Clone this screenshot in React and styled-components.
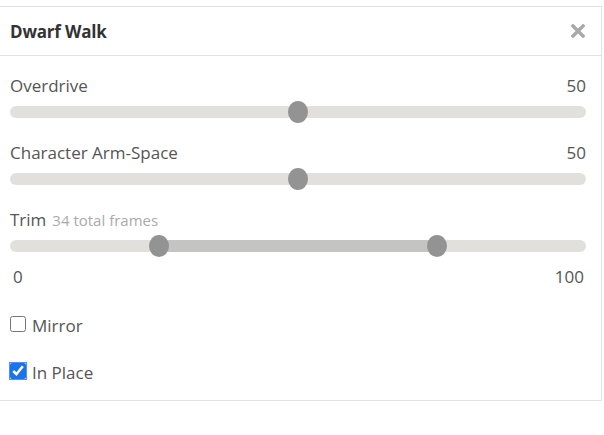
import React, { useState } from 'react';
import styled, { createGlobalStyle } from 'styled-components';

const GlobalStyle = createGlobalStyle`
  body {
    margin: 0;
    background: #fff;
    font-family: "Open Sans", "Noto Sans", sans-serif;
  }
`;

const Page = styled.div`
  padding: 6px 2px 0 0;
`;

const Panel = styled.div`
  border: 1px solid #e2e2e2;
  border-left: none;
  height: 395px;
  box-sizing: border-box;
`;

const Header = styled.div`
  display: flex;
  align-items: center;
  justify-content: space-between;
  height: 48px;
  padding: 0 16px 0 10px;
  border-bottom: 1px solid #e2e2e2;
`;

const Title = styled.h2`
  margin: 0;
  font-size: 17px;
  font-weight: 700;
  color: #333;
  letter-spacing: -0.2px;
`;

const Close = styled.button`
  border: none;
  background: none;
  padding: 0;
  display: flex;
  cursor: pointer;
`;

const Body = styled.div`
  padding: 18px 15px 0 10px;
`;

const Field = styled.div`
  margin-bottom: 23px;
`;

const LabelRow = styled.div`
  display: flex;
  justify-content: space-between;
  align-items: baseline;
  font-size: 17px;
  color: #555;
  height: 22px;
`;

const Hint = styled.span`
  font-size: 15px;
  color: #aaa;
  margin-left: 6px;
`;

const Track = styled.div`
  position: relative;
  height: 12px;
  margin-top: 10px;
  border-radius: 6px;
  background: #e1e0dc;
`;

const Fill = styled.div`
  position: absolute;
  top: 0;
  bottom: 0;
  background: #c4c4c2;
`;

const Thumb = styled.div`
  position: absolute;
  top: 50%;
  width: 20px;
  height: 22px;
  margin: -11px 0 0 -10px;
  border-radius: 50%;
  background: #939393;
`;

const Scale = styled.div`
  display: flex;
  justify-content: space-between;
  font-size: 17px;
  color: #555;
  padding: 0 2px 0 3px;
  margin-top: -10px;
`;

const Check = styled.label`
  display: flex;
  align-items: center;
  gap: 6px;
  font-size: 17px;
  color: #555;
  margin-top: ${p => p.$top}px;
`;

const Box = styled.input`
  width: 16px;
  height: 16px;
  margin: 0 0 4px 0;
  accent-color: #1a73e8;

  &:checked {
    outline: 1px solid #4d90fe;
    outline-offset: 0;
  }
`;

// position along the track, thumb centres stay 10px inside each end
const pos = v => `calc(10px + (100% - 20px) * ${v / 100})`;

function Slider({ label, hint, value, range }) {
  return (
    <Field>
      <LabelRow>
        <span>
          {label}
          {hint && <Hint>{hint}</Hint>}
        </span>
        {value !== undefined && <span>{value}</span>}
      </LabelRow>
      <Track>
        {range ? (
          <>
            <Fill style={{ left: pos(range[0]), width: `calc((100% - 20px) * ${(range[1] - range[0]) / 100})` }} />
            <Thumb style={{ left: pos(range[0]) }} />
            <Thumb style={{ left: pos(range[1]) }} />
          </>
        ) : (
          <Thumb style={{ left: pos(value) }} />
        )}
      </Track>
    </Field>
  );
}

export default function App() {
  const [mirror, setMirror] = useState(false);
  const [inPlace, setInPlace] = useState(true);

  return (
    <Page>
      <GlobalStyle />
      <Panel>
        <Header>
          <Title>Dwarf Walk</Title>
          <Close>
            <svg width="14" height="14" viewBox="0 0 14 14">
              <path d="M2 2 L12 12 M12 2 L2 12" stroke="#a9a9a9" strokeWidth="3.4" strokeLinecap="square" />
            </svg>
          </Close>
        </Header>
        <Body>
          <Slider label="Overdrive" value={50} />
          <Slider label="Character Arm-Space" value={50} />
          <Slider label="Trim" hint="34 total frames" range={[25, 75]} />
          <Scale>
            <span>0</span>
            <span>100</span>
          </Scale>
          <Check $top={26}>
            <Box type="checkbox" checked={mirror} onChange={e => setMirror(e.target.checked)} />
            Mirror
          </Check>
          <Check $top={24}>
            <Box type="checkbox" checked={inPlace} onChange={e => setInPlace(e.target.checked)} />
            In Place
          </Check>
        </Body>
      </Panel>
    </Page>
  );
}
